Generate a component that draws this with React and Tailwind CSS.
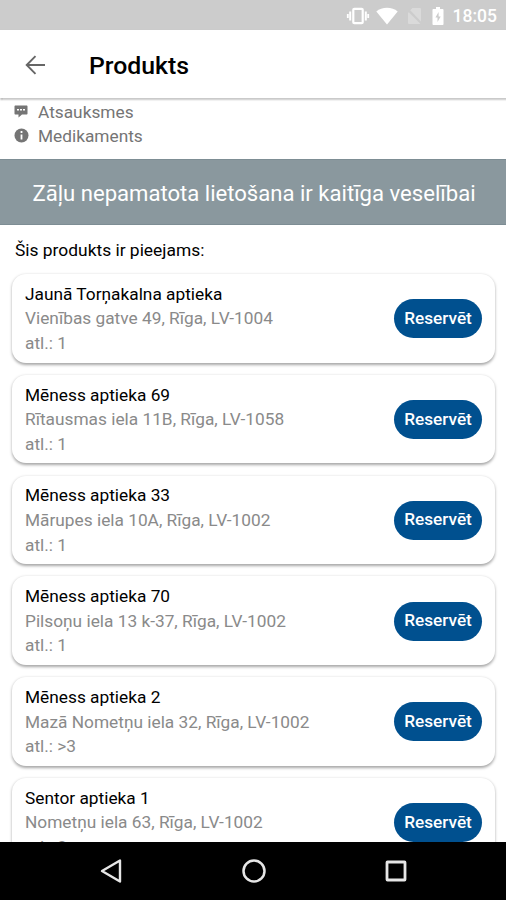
const pharmacies = [
  { name: 'Jaunā Torņakalna aptieka', address: 'Vienības gatve 49, Rīga, LV-1004', stock: '1' },
  { name: 'Mēness aptieka 69', address: 'Rītausmas iela 11B, Rīga, LV-1058', stock: '1' },
  { name: 'Mēness aptieka 33', address: 'Mārupes iela 10A, Rīga, LV-1002', stock: '1' },
  { name: 'Mēness aptieka 70', address: 'Pilsoņu iela 13 k-37, Rīga, LV-1002', stock: '1' },
  { name: 'Mēness aptieka 2', address: 'Mazā Nometņu iela 32, Rīga, LV-1002', stock: '>3' },
  { name: 'Sentor aptieka 1', address: 'Nometņu iela 63, Rīga, LV-1002', stock: '2' },
];

function StatusBar() {
  return (
    <div className="flex h-[30px] shrink-0 items-center justify-end bg-[#cccccc] pt-px pr-[9px] text-white">
      {/* vibrate */}
      <svg width="24" height="20" viewBox="0 0 24 20" fill="none" stroke="currentColor" strokeWidth="2.2">
        <rect x="7.3" y="2.8" width="9.4" height="14.4" rx="1" />
        <path d="M4.2 5.5v9M19.8 5.5v9" strokeWidth="2" />
        <path d="M1.8 8v4M22.2 8v4" strokeWidth="1.8" />
      </svg>
      {/* wifi */}
      <svg className="ml-[6px]" width="22" height="18" viewBox="0 0 22 18" fill="currentColor">
        <path d="M11 17.5L.3 4.4C3.2 2.1 6.9.8 11 .8s7.8 1.3 10.7 3.6z" />
      </svg>
      {/* no sim */}
      <svg className="ml-[8px] text-[#dadada]" width="16" height="18" viewBox="0 0 16 18">
        <path d="M6.5 1H14a1 1 0 0 1 1 1v12.5L4.2 3.3zM2.8 5.2L14.5 17H3a1 1 0 0 1-1-1V6z" fill="currentColor" />
      </svg>
      {/* battery */}
      <svg className="ml-[10px]" width="12" height="20" viewBox="0 0 12 20" fill="currentColor">
        <path
          fillRule="evenodd"
          d="M4 1h4v2h2.5c.6 0 1 .4 1 1v14c0 .6-.4 1-1 1h-9c-.6 0-1-.4-1-1V4c0-.6.4-1 1-1H4zM6.6 6L3.4 11.6h2.1V16l3.2-5.6H6.6z"
        />
      </svg>
      <span className="ml-[9px] text-[17.5px] leading-[30px] font-medium">18:05</span>
    </div>
  );
}

function Header() {
  return (
    <header className="z-10 flex h-[68px] shrink-0 items-center bg-white pt-[2px] pl-[25px] shadow-[0_1.5px_1.5px_0.5px_rgba(0,0,0,0.25)]">
      <svg className="-mt-px" width="21" height="20" viewBox="0 0 21 20" fill="none" stroke="#666666" strokeWidth="1.9">
        <path d="M20 10H2M10.5 1.2L1.7 10l8.8 8.8" />
      </svg>
      <h1 className="mt-[2px] ml-[43px] text-[24.8px] leading-[30px] font-medium text-black">Produkts</h1>
    </header>
  );
}

function ProductLinks() {
  return (
    <div className="h-[61px] shrink-0 pt-[2px] pl-[14px] text-[17.3px] leading-[24px] text-[#757575]">
      <div className="flex items-center">
        <svg className="-mt-[2px]" width="14" height="13" viewBox="0 0 14 13">
          <path d="M1.5.5h11c.6 0 1 .4 1 1v7c0 .6-.4 1-1 1H8l-3.5 3v-3h-3c-.6 0-1-.4-1-1v-7c0-.6.4-1 1-1z" fill="currentColor" />
          <path d="M3 4.8h2M6 4.8h2M9 4.8h2" stroke="#fff" strokeWidth="1.6" />
        </svg>
        <span className="ml-[10px]">Atsauksmes</span>
      </div>
      <div className="flex items-center">
        <svg className="-mt-[2px]" width="15" height="15" viewBox="0 0 15 15">
          <circle cx="7.5" cy="7.5" r="7" fill="currentColor" />
          <path d="M7.5 3v2M7.5 6.5v5" stroke="#fff" strokeWidth="1.8" />
        </svg>
        <span className="ml-[9px]">Medikaments</span>
      </div>
    </div>
  );
}

function PharmacyCard({ name, address, stock }) {
  return (
    <li className="flex h-[88.5px] shrink-0 items-center justify-between rounded-[14px] bg-white pt-px pr-[13px] pl-[13px] shadow-[0_1.5px_3px_rgba(0,0,0,0.35)]">
      <div className="text-[17.3px] leading-[24.6px] whitespace-nowrap text-[#8a8a8a]">
        <p className="text-black">{name}</p>
        <p>{address}</p>
        <p>atl.: {stock}</p>
      </div>
      <button className="h-[39px] w-[88px] rounded-full bg-[#00508f] text-[17.2px] font-medium text-white">Reservēt</button>
    </li>
  );
}

function NavBar() {
  return (
    <nav className="z-10 flex h-[58px] shrink-0 items-center justify-between bg-black pr-[98px] pl-[99px]">
      <svg width="24" height="26" viewBox="0 0 24 26" fill="none" stroke="#e6e6e6" strokeWidth="2.4" strokeLinejoin="round">
        <path d="M21 2.5v21L3 13z" />
      </svg>
      <svg width="26" height="26" viewBox="0 0 26 26" fill="none" stroke="#e6e6e6" strokeWidth="2.5">
        <circle cx="13" cy="13" r="10.5" />
      </svg>
      <svg width="24" height="24" viewBox="0 0 24 24" fill="none" stroke="#e6e6e6" strokeWidth="2.8">
        <rect x="3" y="3" width="18" height="18" rx="0.5" />
      </svg>
    </nav>
  );
}

export default function App() {
  return (
    <div className="flex h-[900px] w-[506px] flex-col overflow-hidden bg-white font-['Roboto',sans-serif]">
      <StatusBar />
      <Header />
      <main className="flex min-h-0 flex-1 flex-col overflow-hidden">
        <ProductLinks />
        <div className="flex h-[66px] shrink-0 items-center justify-center border-y border-[#7d8d94] bg-[#8a989e] pt-[3px] pl-[2px] text-[22.1px] whitespace-nowrap text-white">
          Zāļu nepamatota lietošana ir kaitīga veselībai
        </div>
        <p className="mt-[13px] shrink-0 pl-[15px] text-[17.4px] leading-[24px] text-black">Šis produkts ir pieejams:</p>
        <ul className="mt-[12px] flex flex-col gap-[12.3px] pr-[11px] pl-[12px]">
          {pharmacies.map((pharmacy) => (
            <PharmacyCard key={pharmacy.name} {...pharmacy} />
          ))}
        </ul>
      </main>
      <NavBar />
    </div>
  );
}
